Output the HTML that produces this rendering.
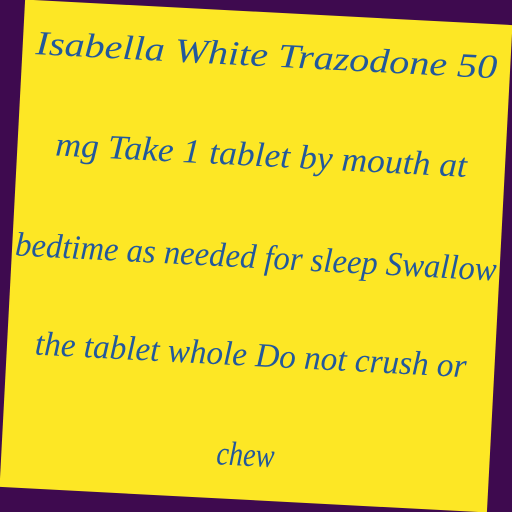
<!DOCTYPE html>
<html><head><style>
html,body{margin:0;padding:0;width:512px;height:512px;overflow:hidden;background:#3e0a4f;}
svg{display:block}
text{font-family:"Liberation Serif",serif;font-style:italic;font-size:34px;fill:#22589c;}
</style></head><body>
<svg width="512" height="512" viewBox="0 0 512 512">
<g transform="rotate(3 256 256)">
<rect x="12" y="12" width="488" height="488" fill="#fde725"/>
<text x="256" y="66" text-anchor="middle" textLength="462" lengthAdjust="spacingAndGlyphs">Isabella White Trazodone 50</text>
<text x="256" y="166" text-anchor="middle" textLength="412" lengthAdjust="spacingAndGlyphs">mg Take 1 tablet by mouth at</text>
<text x="256" y="268" text-anchor="middle" textLength="482" lengthAdjust="spacingAndGlyphs">bedtime as needed for sleep Swallow</text>
<text x="256" y="366" text-anchor="middle" textLength="432" lengthAdjust="spacingAndGlyphs">the tablet whole Do not crush or</text>
<text x="256" y="466" text-anchor="middle" textLength="58" lengthAdjust="spacingAndGlyphs">chew</text>
</g>
</svg>
</body></html>
